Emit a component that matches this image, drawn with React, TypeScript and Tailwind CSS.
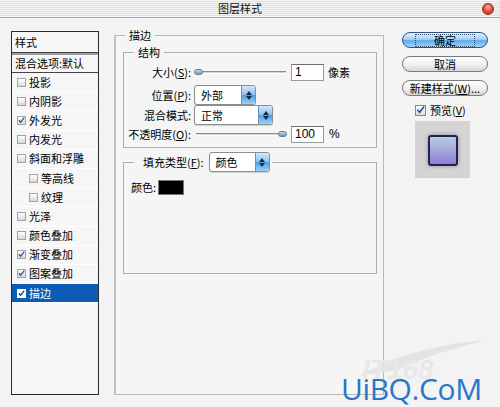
import React from "react";

const styles = [
  { label: "投影" },
  { label: "内阴影" },
  { label: "外发光", checked: true },
  { label: "内发光" },
  { label: "斜面和浮雕" },
  { label: "等高线", sub: true },
  { label: "纹理", sub: true },
  { label: "光泽" },
  { label: "颜色叠加" },
  { label: "渐变叠加", checked: true },
  { label: "图案叠加", checked: true },
  { label: "描边", checked: true, active: true },
];

function Check({ checked, active }: { checked?: boolean; active?: boolean }) {
  return (
    <span
      className={
        "w-[9px] h-[9px] shrink-0 flex items-center justify-center border " +
        (active
          ? "border-white bg-white"
          : "border-[#a3a3a3] bg-linear-to-b from-white to-[#d8d8d8]")
      }
    >
      {checked && (
        <svg width="9" height="9" viewBox="0 0 9 9">
          <path d="M1.2 4.2 L3.4 6.8 L8 0.8" stroke={active ? "#0b3f86" : "#1f55a6"} strokeWidth="1.7" fill="none" />
        </svg>
      )}
    </span>
  );
}

function U({ c }: { c: string }) {
  return <span className="underline underline-offset-1">{c}</span>;
}

function Stepper() {
  return (
    <span className="w-[14px] h-full rounded-r-[3px] border-l border-[#6d8fb8] bg-[linear-gradient(to_bottom,#cfe8fb_0%,#8cc4f1_48%,#4f9de6_52%,#9ad3fa_100%)] flex flex-col items-center justify-center gap-[1px]">
      <svg width="6" height="4" viewBox="0 0 6 4">
        <path d="M3 0 L6 4 L0 4 Z" fill="#1c2c44" />
      </svg>
      <svg width="6" height="4" viewBox="0 0 6 4">
        <path d="M0 0 L6 0 L3 4 Z" fill="#1c2c44" />
      </svg>
    </span>
  );
}

function Select({ value, width }: { value: string; width: string }) {
  return (
    <div className={"h-[20px] flex items-stretch bg-white border border-[#8c8c8c] rounded-[3px] shadow-[0_1px_1px_rgba(0,0,0,0.15)] " + width}>
      <span className="flex-1 pl-[6px] flex items-center leading-none">{value}</span>
      <Stepper />
    </div>
  );
}

function Slider({ at }: { at: "start" | "end" }) {
  return (
    <div className="w-[93px] h-[10px] relative flex items-center">
      <div className="ml-[2px] w-[90px] h-[3px] border-t border-[#8e8e8e] bg-[#d4d4d4] border-b border-b-white" />
      <span
        className={
          "absolute top-[2px] w-[9px] h-[6px] rounded-full bg-linear-to-b from-[#c8dcf2] to-[#6f93c2] border border-[#6a7e9c] " +
          (at === "start" ? "left-[0px]" : "left-[84px]")
        }
      />
    </div>
  );
}

function Field({ value }: { value: string }) {
  return (
    <div className="w-[33px] h-[17px] bg-white border border-[#9a9a9a] border-t-[#6f6f6f] pl-[3px] flex items-center leading-none font-['Liberation_Sans',sans-serif] text-[12px]">
      {value}
    </div>
  );
}

export default function App() {
  return (
    <div className="w-[500px] h-[407px] relative overflow-hidden bg-[#f3f3f3] text-[11px] text-black font-['Noto_Sans_CJK_SC','Noto_Sans',sans-serif]">
      {/* title bar */}
      <div className="h-[18px] relative flex items-center justify-center border-b border-[#a8a8a8] bg-[repeating-linear-gradient(to_bottom,#f4f4f4_0px,#f4f4f4_1px,#e0e0e0_1px,#e0e0e0_2px)]">
        <span className="ml-[-20px] text-[11px] leading-none text-[#111]">图层样式</span>
        <span className="absolute right-[6px] top-[3px] w-[12px] h-[12px] rounded-full border border-[#8a2a22] bg-[radial-gradient(circle_at_50%_35%,#ffb7a8_0%,#e8553f_45%,#a8281c_100%)]" />
      </div>

      <div className="flex items-start pl-[11px] pt-[9px]">
        {/* style list */}
        <div className="mt-[4px] w-[88px] h-[364px] border border-[#2b2b2b] bg-[#f6f6f6] flex flex-col">
          <div className="h-[20px] pl-[3px] flex items-center leading-none">样式</div>
          <div className="h-[3px] border-t border-[#444] bg-[#9a9a9a]" />
          <div className="h-[18px] pl-[3px] flex items-center leading-none border-b border-[#444]">混合选项:默认</div>
          {styles.map((s) => (
            <div
              key={s.label}
              className={
                "h-[19.2px] flex items-center gap-[3px] leading-none border-b border-white " +
                (s.sub ? "pl-[17px] " : "pl-[5px] ") +
                (s.active ? "bg-[#0c5bb4] text-white" : "")
              }
            >
              <Check checked={s.checked} active={s.active} />
              <span>{s.label}</span>
            </div>
          ))}
        </div>

        {/* middle panel */}
        <div className="ml-[15px] mt-[8px] w-[270px] h-[360px] relative border border-[#b9b9b9] border-l-2 border-l-[#c2c2c2] pl-[7px] bg-[#f5f5f5]">
          <span className="absolute left-[9px] top-[-9px] px-[4px] leading-[16px] bg-[#f4f4f4]">描边</span>

          <div className="mt-[16px] w-[254px] relative border border-[#aeaeae] pt-[9px] pb-[3px]">
            <span className="absolute left-[10px] top-[-9px] px-[4px] leading-[16px] bg-[#f5f5f5]">结构</span>
            <div className="h-[20px] flex items-center">
              <span className="w-[67px] text-right">
                大小(<U c="S" />):
              </span>
              <div className="ml-[3px]">
                <Slider at="start" />
              </div>
              <div className="ml-[4px]">
                <Field value="1" />
              </div>
              <span className="ml-[4px]">像素</span>
            </div>
            <div className="mt-[3px] h-[20px] flex items-center">
              <span className="w-[67px] text-right">
                位置(<U c="P" />):
              </span>
              <div className="ml-[3px]">
                <Select value="外部" width="w-[62px]" />
              </div>
            </div>
            <div className="h-[20px] flex items-center">
              <span className="w-[67px] text-right">混合模式:</span>
              <div className="ml-[3px]">
                <Select value="正常" width="w-[79px]" />
              </div>
            </div>
            <div className="mt-[-1px] h-[20px] flex items-center">
              <span className="w-[67px] text-right whitespace-nowrap">
                不透明度(<U c="O" />):
              </span>
              <div className="ml-[3px]">
                <Slider at="end" />
              </div>
              <div className="ml-[4px]">
                <Field value="100" />
              </div>
              <span className="ml-[5px] font-['Liberation_Sans',sans-serif] text-[12px]">%</span>
            </div>
          </div>

          <div className="mt-[14px] w-[254px] h-[112px] relative border border-[#aeaeae] pt-[16px]">
            <div className="absolute left-[10px] top-[-11px] pl-[9px] pr-[2px] flex items-center bg-[#f5f5f5]">
              <span>
                填充类型(<U c="F" />):
              </span>
              <div className="ml-[5px]">
                <Select value="颜色" width="w-[61px]" />
              </div>
            </div>
            <div className="pl-[7px] h-[17px] flex items-center">
              <span>颜色:</span>
              <span className="ml-[2px] w-[26px] h-[15px] bg-black border border-[#777]" />
            </div>
          </div>
        </div>

        {/* buttons */}
        <div className="ml-[18px] mt-[5px] w-[86px] flex flex-col">
          <button className="h-[16px] rounded-full border border-[#2f5587] bg-[linear-gradient(to_bottom,#e2f1fd_0%,#a6d3f6_45%,#5ea9ec_55%,#9ed6fb_100%)] text-[11px] leading-none flex items-center justify-center">
            <span className="px-[18px] border border-dotted border-[#3a4a60]">确定</span>
          </button>
          <button className="mt-[8px] h-[16px] rounded-full border border-[#7a7a7a] bg-linear-to-b from-white via-[#f2f2f2] to-[#d6d6d6] text-[11px] leading-none flex items-center justify-center">
            取消
          </button>
          <button className="mt-[8px] h-[16px] rounded-full border border-[#7a7a7a] bg-linear-to-b from-white via-[#f2f2f2] to-[#d6d6d6] text-[11px] leading-none flex items-center justify-center whitespace-nowrap">
            新建样式(<U c="W" />)...
          </button>
          <div className="mt-[7px] h-[14px] pl-[13px] flex items-center gap-[4px] leading-none">
            <span className="w-[11px] h-[11px] border border-[#8a8a8a] bg-linear-to-b from-white to-[#d8d8d8] flex items-center justify-center">
              <svg width="10" height="10" viewBox="0 0 10 10">
                <path d="M1.5 4.8 L4 7.6 L9 1" stroke="#1f55a6" strokeWidth="1.8" fill="none" />
              </svg>
            </span>
            <span>
              预览(<U c="V" />)
            </span>
          </div>
          <div className="mt-[4px] ml-[13px] w-[55px] h-[57px] bg-[#d4d4d4] flex items-center justify-center">
            <div className="mt-[2px] w-[30px] h-[31px] rounded-[3px] border-2 border-[#22224a] bg-[linear-gradient(to_bottom,#b9cbe6_0%,#a3a8dc_50%,#8a7fd6_100%)] shadow-[0_0_4px_rgba(60,50,140,0.45)]" />
          </div>
        </div>
      </div>

      {/* watermark */}
      <div className="absolute left-[350px] top-[336px] pointer-events-none">
        <svg width="140" height="60" viewBox="0 0 140 60">
          <path d="M10 40 C40 20 90 8 135 4 C100 14 70 22 48 34 Z" fill="#e2e2e2" opacity="0.9" />
        </svg>
        <span className="absolute left-[12px] top-[20px] text-[28px] italic font-bold text-[#e8e8e8] font-['Liberation_Sans',sans-serif] leading-none">
          IT168
        </span>
      </div>
      <div className="absolute left-[341px] top-[374px] text-[30px] leading-none tracking-[-0.4px] text-[#2777cc] font-['Open_Sans',sans-serif]">
        UiBQ.CoM
      </div>
    </div>
  );
}
